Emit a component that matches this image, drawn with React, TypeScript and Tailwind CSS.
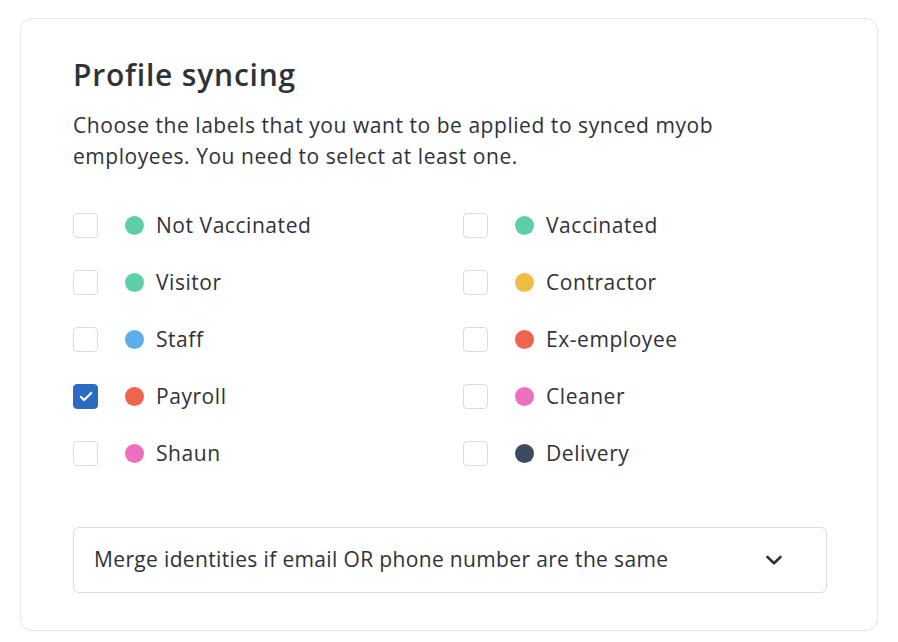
import React, { useState } from 'react';

const LABELS: { name: string; color: string }[] = [
    { name: 'Not Vaccinated', color: 'bg-[#5dcfa8]' },
    { name: 'Vaccinated', color: 'bg-[#5dcfa8]' },
    { name: 'Visitor', color: 'bg-[#5dcfa8]' },
    { name: 'Contractor', color: 'bg-[#f2bb43]' },
    { name: 'Staff', color: 'bg-[#5baeea]' },
    { name: 'Ex-employee', color: 'bg-[#ef644c]' },
    { name: 'Payroll', color: 'bg-[#ef644c]' },
    { name: 'Cleaner', color: 'bg-[#ee6ec0]' },
    { name: 'Shaun', color: 'bg-[#ee6ec0]' },
    { name: 'Delivery', color: 'bg-[#3b4c5e]' },
];

function LabelOption({ name, color, checked, onToggle }: { name: string; color: string; checked: boolean; onToggle: () => void }) {
    return (
        <label className="flex items-center h-[57px] cursor-pointer select-none">
            <span
                onClick={onToggle}
                className={`flex items-center justify-center w-[25px] h-[25px] rounded-[4px] shrink-0 ${checked ? 'bg-[#2b6bc4] border border-[#2b6bc4]' : 'bg-white border border-[#dcdcdc]'}`}
            >
                {checked && (
                    <svg width="14" height="11" viewBox="0 0 14 11" fill="none">
                        <path d="M1.8 5.8 5.2 9 12.2 2" stroke="white" strokeWidth="2.2" strokeLinecap="round" strokeLinejoin="round" />
                    </svg>
                )}
            </span>
            <span className={`ml-[27px] w-[19px] h-[19px] rounded-full shrink-0 ${color}`} />
            <span className="ml-[12px] text-[21px] text-[#2f3237] tracking-[0.55px]">{name}</span>
        </label>
    );
}

export default function App() {
    const [checked, setChecked] = useState<Record<string, boolean>>({ Payroll: true });

    return (
        <div className="min-h-screen bg-white pt-[18px] pl-[20px] font-['Open_Sans',sans-serif]">
            <div className="w-[858px] h-[613px] border border-[#e6e6e6] rounded-[12px] bg-white pl-[52px] pr-[51px] pt-[36px]">
                <h2 className="text-[30px] leading-[40px] font-semibold text-[#2f3237] tracking-[0.8px]">Profile syncing</h2>
                <p className="mt-[15px] text-[21px] leading-[31px] text-[#2f3237] w-[690px] tracking-[0.55px]">
                    Choose the labels that you want to be applied to synced myob employees. You need to select at least one.
                </p>

                {/* Labels */}
                <div className="mt-[25px] grid grid-cols-[390px_1fr]">
                    {LABELS.map((l) => (
                        <LabelOption
                            key={l.name}
                            name={l.name}
                            color={l.color}
                            checked={!!checked[l.name]}
                            onToggle={() => setChecked((c) => ({ ...c, [l.name]: !c[l.name] }))}
                        />
                    ))}
                </div>

                {/* Merge select */}
                <button className="mt-[45px] w-[754px] h-[66px] flex items-center justify-between border border-[#dcdcdc] rounded-[6px] pl-[20px] pr-[43px] bg-white">
                    <span className="text-[21px] text-[#2f3237] tracking-[0.35px]">Merge identities if email OR phone number are the same</span>
                    <svg width="18" height="12" viewBox="0 0 18 12" fill="none">
                        <path d="M2.5 3 9 9.2 15.5 3" stroke="#2f3237" strokeWidth="2.6" strokeLinecap="round" strokeLinejoin="round" />
                    </svg>
                </button>
            </div>
        </div>
    );
}
